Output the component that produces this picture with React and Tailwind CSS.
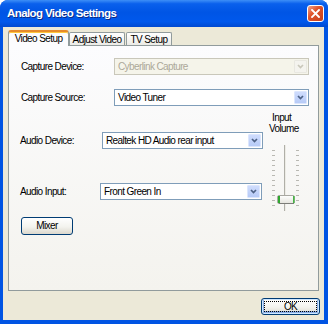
import React from "react";

const font = "font-['Liberation_Sans',Arial,sans-serif] tracking-[-0.6px]";

function Combo({ value, className, disabled }) {
  return (
    <div
      className={`flex h-[17px] items-stretch border p-px ${className} ${
        disabled ? "border-[#C9C7BA] bg-[#F5F4EA] text-[#ACA899]" : "border-[#7F9DB9] bg-white text-black"
      }`}
    >
      <div className="flex flex-1 items-center truncate whitespace-nowrap pl-[2px] leading-none">{value}</div>
      <div
        className={`flex w-[13px] items-center justify-center rounded-[1px] border ${
          disabled
            ? "border-[#E8E7E0] bg-[#F4F3EE]"
            : "border-[#DCE6FD] bg-[linear-gradient(to_bottom,#CFDCFD,#B7CBF7)]"
        }`}
      >
        <svg width="7" height="5" viewBox="0 0 7 5">
          <polyline
            points="1,1 3.5,3.5 6,1"
            fill="none"
            stroke={disabled ? "#C9C7BA" : "#4D6185"}
            strokeWidth="1.7"
          />
        </svg>
      </div>
    </div>
  );
}

function XpButton({ children, className, focused }) {
  return (
    <div
      className={`flex rounded-[3px] border border-[#003C74] bg-[linear-gradient(to_bottom,#FFFFFF,#F3F3EE_55%,#DCD8CD)] p-[2px] ${className} ${
        focused ? "shadow-[inset_0_0_0_1px_#CEE7FF,inset_0_-1px_0_2px_#89ADE4]" : ""
      }`}
    >
      <div
        className={`flex flex-1 items-center justify-center leading-none ${
          focused ? "border border-dotted border-black" : ""
        }`}
      >
        {children}
      </div>
    </div>
  );
}

function VolumeSlider() {
  const ticks = Array.from({ length: 12 }, (_, i) => 5 + i * 5);
  return (
    <svg width="34" height="66" viewBox="0 0 34 66">
      <defs>
        <linearGradient id="thumb" x1="0" y1="0" x2="0" y2="1">
          <stop offset="0" stopColor="#FFFFFF" />
          <stop offset="1" stopColor="#E4E3DC" />
        </linearGradient>
      </defs>
      <rect x="18" y="0" width="1" height="66" fill="#B0AFA8" />
      <rect x="19" y="0" width="1" height="66" fill="#EDECE6" />
      {ticks.map((y) => (
        <g key={y}>
          <rect x="6" y={y} width="3" height="1" fill="#B9B8B2" />
          <rect x="30" y={y} width="3" height="1" fill="#B9B8B2" />
        </g>
      ))}
      <rect x="11.5" y="50.5" width="17" height="8" rx="1.5" fill="url(#thumb)" stroke="#A9A8A2" />
      <rect x="12" y="51" width="2" height="7" fill="#2FA82F" />
      <rect x="27" y="51" width="1.5" height="7" fill="#45B845" />
      <rect x="13" y="58" width="15" height="1" fill="#7C7C78" />
    </svg>
  );
}

export default function App() {
  return (
    <div className={`h-[324px] w-[328px] bg-white text-[10px] text-black ${font}`}>
      <div className="flex h-full flex-col rounded-t-[8px] bg-[#0054E3]">
        {/* title bar */}
        <div className="flex h-[27px] items-center justify-between rounded-t-[8px] bg-[linear-gradient(to_bottom,#3D8FF7_0%,#0A60EC_14%,#0055E5_45%,#0058EC_80%,#0049D0_100%)] pl-[7px] pr-[4px]">
          <span className="text-[11.5px] font-bold text-white [text-shadow:1px_1px_0_#0B2A86]">
            Analog Video Settings
          </span>
          <div className="flex h-[17px] w-[17px] items-center justify-center rounded-[3px] border border-white bg-[linear-gradient(135deg,#F0A48C,#E0542C_40%,#C4401C)]">
            <svg width="9" height="9" viewBox="0 0 9 9">
              <path d="M1 1 L8 8 M8 1 L1 8" stroke="white" strokeWidth="1.9" strokeLinecap="square" />
            </svg>
          </div>
        </div>

        {/* body */}
        <div className="flex flex-1 flex-col border-b-[4px] border-l-[3px] border-r-[4px] border-[#0054E3] bg-[#ECE9D8] pl-[5px] pt-[3px]">
          {/* tabs */}
          <div className="flex items-end whitespace-nowrap">
            <div className="relative z-10 -mb-px flex h-[16px] w-[61px] items-start justify-center rounded-t-[3px] border-x border-t-[2px] border-[#919B9C] border-t-[#E68B2C] bg-[#FCFCFE] pt-[2px] shadow-[inset_0_1px_0_#FFC73C] leading-[10px]">
              Video Setup
            </div>
            <div className="flex h-[13px] w-[56px] items-center justify-center rounded-t-[2px] border-x border-t border-[#919B9C] bg-[linear-gradient(to_bottom,#FFFFFF,#ECEBE6)] pt-px leading-none">
              Adjust Video
            </div>
            <div className="ml-px flex h-[13px] w-[46px] items-center justify-center rounded-t-[2px] border-x border-t border-[#919B9C] bg-[linear-gradient(to_bottom,#FFFFFF,#ECEBE6)] pt-px leading-none">
              TV Setup
            </div>
          </div>

          {/* tab panel */}
          <div className="flex h-[246px] w-[311px] flex-col border border-[#919B9C] bg-[linear-gradient(to_bottom,#FCFCFE,#F4F3EE)] pt-[12px]">
            <div className="flex items-center pl-[12px]">
              <span className="w-[93px]">Capture Device:</span>
              <Combo value="Cyberlink Capture" className="w-[195px]" disabled />
            </div>
            <div className="mt-[14px] flex items-center pl-[12px]">
              <span className="w-[93px]">Capture Source:</span>
              <Combo value="Video Tuner" className="w-[195px]" />
            </div>

            <div className="mt-[6px] flex pl-[11px]">
              <div className="flex w-[246px] flex-col">
                <div className="mt-[20px] flex items-center">
                  <span className="w-[82px]">Audio Device:</span>
                  <Combo value="Realtek HD Audio rear input" className="w-[161px]" />
                </div>
                <div className="mt-[34px] flex items-center">
                  <span className="w-[80px]">Audio Input:</span>
                  <Combo value="Front Green In" className="w-[162px]" />
                </div>
                <XpButton className="ml-px mt-[17px] h-[18px] w-[52px]">Mixer</XpButton>
              </div>

              <div className="flex w-[34px] flex-col">
                <div className="pl-[3px] leading-[11px]">
                  <div className="pl-[3px]">Input</div>
                  <div>Volume</div>
                </div>
                <div className="mt-[11px]">
                  <VolumeSlider />
                </div>
              </div>
            </div>
          </div>

          {/* footer */}
          <div className="mt-[7px] flex justify-end pr-[4px]">
            <XpButton className="h-[17px] w-[59px]" focused>
              OK
            </XpButton>
          </div>
        </div>
      </div>
    </div>
  );
}
